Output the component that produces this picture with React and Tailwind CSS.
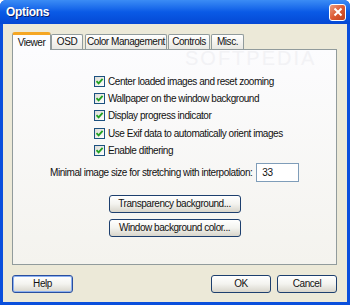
import React from "react";

const font = { fontFamily: '"Liberation Sans", Arial, sans-serif' };
const t = "text-[10px] tracking-[-0.45px] leading-none text-[#111] whitespace-nowrap";

function Check({ label }) {
  return (
    <div className="flex items-center h-[13px] gap-[3px]">
      <div className="w-[11px] h-[11px] shrink-0 border border-[#1c5180] bg-gradient-to-br from-[#dcdcd6] to-[#ffffff] flex items-center justify-center">
        <svg width="9" height="9" viewBox="0 0 9 9">
          <path d="M1.5 4.2 L3.6 6.4 L7.6 1.8" stroke="#21a121" strokeWidth="1.8" fill="none" />
        </svg>
      </div>
      <span className={t}>{label}</span>
    </div>
  );
}

function XPButton({ children, className = "", focus = false }) {
  return (
    <div
      className={
        "h-[18px] rounded-[3px] border flex items-center justify-center bg-gradient-to-b from-[#ffffff] via-[#f3f3ef] to-[#d8d5cb] " +
        t + " " +
        (focus ? "border-[#2a4f9e] shadow-[inset_0_0_0_1px_#8cb0f0]" : "border-[#1d3f6e]") +
        " " +
        className
      }
    >
      {children}
    </div>
  );
}

function Tab({ children, selected, className = "" }) {
  if (selected) {
    return (
      <div className={"relative z-10 h-[18px] -mb-[1px] bg-[#fcfcfe] border-x border-[#919b9c] border-t-[3px] border-t-[#f5a623] rounded-t-[3px] flex items-center justify-center " + t + " " + className}>
        {children}
      </div>
    );
  }
  return (
    <div className={"h-[15px] bg-gradient-to-b from-[#ffffff] to-[#e9e8e2] border-x border-t border-[#919b9c] rounded-t-[2px] flex items-center justify-center " + t + " " + className}>
      {children}
    </div>
  );
}

export default function App() {
  return (
    <div style={font} className="w-[350px] h-[305px] bg-[#0a4fdc] flex flex-col rounded-t-[6px] overflow-hidden">
      <div className="h-[24px] shrink-0 bg-gradient-to-b from-[#3b8cf5] via-[#0a5ae6] to-[#0548d4] flex items-center justify-between pl-[6px] pr-[4px]">
        <span className="text-white font-bold text-[12px] tracking-[-0.3px] leading-none [text-shadow:1px_1px_0_#0a1e6e]">Options</span>
        <div className="w-[17px] h-[17px] rounded-[3px] border border-white bg-gradient-to-br from-[#e99b7f] via-[#dc5a32] to-[#c0401c] flex items-center justify-center">
          <svg width="10" height="10" viewBox="0 0 10 10">
            <path d="M1.5 1.5 L8.5 8.5 M8.5 1.5 L1.5 8.5" stroke="white" strokeWidth="2" />
          </svg>
        </div>
      </div>
      <div className="flex-1 mx-[3px] mb-[3px] bg-[#ece9d8] flex flex-col pl-[9px] pr-[10px] pt-[8px]">
        <div className="flex items-end h-[17px]">
          <Tab selected className="w-[39px]">Viewer</Tab>
          <Tab className="w-[32px]">OSD</Tab>
          <Tab className="w-[82px] ml-[2px]">Color Management</Tab>
          <Tab className="w-[42px] ml-[1px]">Controls</Tab>
          <Tab className="w-[33px] ml-[1px]">Misc.</Tab>
        </div>
        <div className="relative h-[216px] border border-[#919b9c] bg-gradient-to-b from-[#fcfcfe] to-[#f4f3ee] flex flex-col">
          <div className="absolute left-[172px] top-[-2px] text-[20px] tracking-[2px] text-[#f2f2f5] leading-none select-none">SOFTPEDIA</div>
          <div className="flex flex-col gap-[4px] pl-[81px] pt-[25px]">
            <Check label="Center loaded images and reset zooming" />
            <Check label="Wallpaper on the window background" />
            <Check label="Display progress indicator" />
            <div className="mt-[1px]">
              <Check label="Use Exif data to automatically orient images" />
            </div>
            <Check label="Enable dithering" />
          </div>
          <div className="flex items-center pl-[37px] mt-[6px] gap-[4px]">
            <span className={t}>Minimal image size for stretching with interpolation:</span>
            <div className={"w-[43px] h-[19px] border border-[#7f9db9] bg-white flex items-center pl-[5px] " + t}>33</div>
          </div>
          <div className="flex flex-col items-center mt-[13px] gap-[6px]">
            <XPButton className="w-[132px]">Transparency background...</XPButton>
            <XPButton className="w-[132px]">Window background color...</XPButton>
          </div>
        </div>
        <div className="flex items-center mt-[10px]">
          <XPButton focus className="w-[61px]">Help</XPButton>
          <div className="flex-1" />
          <XPButton className="w-[60px]">OK</XPButton>
          <XPButton className="w-[60px] ml-[6px]">Cancel</XPButton>
        </div>
      </div>
    </div>
  );
}
